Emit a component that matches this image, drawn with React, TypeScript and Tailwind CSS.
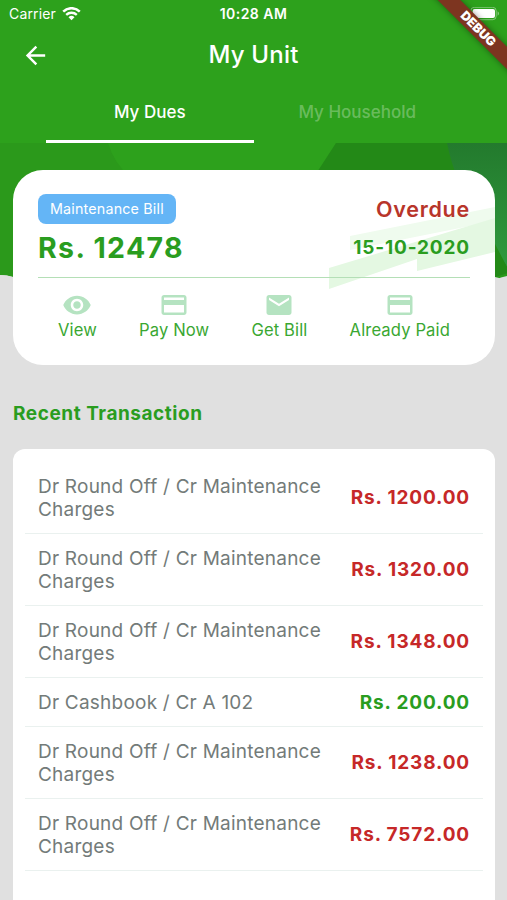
import { MdArrowBack, MdCreditCard, MdEmail, MdRemoveRedEye } from 'react-icons/md';

const actions = [
  { label: 'View', icon: MdRemoveRedEye },
  { label: 'Pay Now', icon: MdCreditCard },
  { label: 'Get Bill', icon: MdEmail },
  { label: 'Already Paid', icon: MdCreditCard },
];

const transactions = [
  { title: 'Dr Round Off / Cr Maintenance Charges', amount: 'Rs. 1200.00', credit: false },
  { title: 'Dr Round Off / Cr Maintenance Charges', amount: 'Rs. 1320.00', credit: false },
  { title: 'Dr Round Off / Cr Maintenance Charges', amount: 'Rs. 1348.00', credit: false },
  { title: 'Dr Cashbook / Cr A 102', amount: 'Rs. 200.00', credit: true },
  { title: 'Dr Round Off / Cr Maintenance Charges', amount: 'Rs. 1238.00', credit: false },
  { title: 'Dr Round Off / Cr Maintenance Charges', amount: 'Rs. 7572.00', credit: false },
];

function StatusBar() {
  return (
    <div className="grid h-[27px] grid-cols-3 items-center px-[8px] text-[14px] text-white">
      <div className="flex items-center gap-[6px] pl-px">
        <span className="tracking-[0.15px]">Carrier</span>
        <svg width="19" height="14" viewBox="0 0 19 14" fill="none" stroke="currentColor">
          <path d="M1.2 4.6a11.8 11.8 0 0 1 16.6 0" strokeWidth="2.5" />
          <path d="M4.2 7.9a7.6 7.6 0 0 1 10.6 0" strokeWidth="2.3" />
          <path d="M9.5 13.2 6.5 10.2a4.3 4.3 0 0 1 6 0Z" fill="currentColor" stroke="none" />
        </svg>
      </div>
      <span className="text-center font-semibold tracking-[0.45px]">10:28 AM</span>
      <svg className="relative -mr-px justify-self-end" width="30" height="14" viewBox="0 0 30 14">
        <rect x="0.8" y="0.3" width="25.4" height="12.4" rx="3.6" fill="none" stroke="white" strokeOpacity="0.4" />
        <rect x="2.6" y="1.9" width="22.4" height="9.2" rx="2" fill="white" />
        <path d="M27.6 4.3c1.8.8 1.8 3.6 0 4.4Z" fill="white" fillOpacity="0.45" />
      </svg>
    </div>
  );
}

function DebugBanner() {
  return (
    <div className="pointer-events-none absolute right-0 top-0 z-10 h-20 w-20 overflow-hidden">
      <div className="absolute left-[-9px] top-[21px] flex h-[16px] w-[120px] rotate-45 items-center justify-center bg-[#7d3520] text-[12.6px] font-black text-white shadow-[0_0_6px_rgba(0,0,0,0.4)]">
        DEBUG
      </div>
    </div>
  );
}

function Backdrop() {
  return (
    <svg className="absolute inset-x-0 top-0" width="507" height="137" viewBox="0 0 507 137">
      <defs>
        <linearGradient id="teal" x1="0" y1="0" x2="0" y2="1">
          <stop offset="0" stopColor="#237a2d" />
          <stop offset="1" stopColor="#2f9a3e" />
        </linearGradient>
      </defs>
      <path d="M0 0H507V137L495 134H13Q7 132 0 132Z" fill="#2b991b" />
      <path d="M108 0H336L318 34H130Q114 20 108 0Z" fill="#2da11c" />
      <path d="M336 0H507V130L495 134V40H310Z" fill="#238917" />
      <path d="M447 0H507V124Q496 105 480 80Q455 40 447 0Z" fill="url(#teal)" />
      <path d="M495 101L507 124V130L495 134Z" fill="#238917" />
      <path d="M0 132Q7 132 13 134V137H0Z" fill="#e0e0e0" />
      <path d="M507 133Q501 134 495 137H507Z" fill="#e0e0e0" />
    </svg>
  );
}

function BillCard() {
  return (
    <div className="relative ml-[13px] mr-[12px] h-[195px] overflow-hidden rounded-[30px] bg-white">
      <svg className="absolute right-0 top-[36px]" width="166" height="86" viewBox="0 0 166 86" fill="#e4f8e2">
        <path d="M21 30 166 1V15L21 44Z" fill="#effbee" />
        <path d="M0 62 166 12V46L88 65V53L0 83Z" />
      </svg>
      <div className="relative px-[25px] pt-[24px]">
        <div className="flex h-[30px] items-center justify-between">
          <div className="flex h-[30px] items-center rounded-lg bg-[#64b5f6] px-3 text-[14.3px] tracking-[0.18px] text-white">
            Maintenance Bill
          </div>
          <p className="text-[21.5px] font-semibold tracking-[0.75px] text-[#b8352a]">Overdue</p>
        </div>
        <div className="flex h-[49px] items-center justify-between text-[#2a9d1f]">
          <p className="text-[28.5px] font-bold tracking-[1.35px]">Rs. 12478</p>
          <p className="text-[19px] font-bold tracking-[0.85px]">15-10-2020</p>
        </div>
        <div className="mt-[4px] h-px bg-[#b4dfb6]" />
        <div className="flex justify-between px-5 pt-[12px]">
          {actions.map(({ label, icon: Icon }) => (
            <div key={label} className="flex flex-col items-center text-[#3aa732]">
              <Icon className="h-[30px] w-[30px] text-[#b5e3c1]" />
              <span className="-mt-px text-[16.6px] leading-[22px] tracking-[0.12px]">{label}</span>
            </div>
          ))}
        </div>
      </div>
    </div>
  );
}

export default function App() {
  return (
    <div className="relative flex h-[900px] w-[507px] flex-col overflow-hidden bg-[#e0e0e0] font-['Inter',sans-serif]">
      <header className="h-[143px] bg-[#2da11c] text-white">
        <StatusBar />
        <div className="relative flex h-[56px] items-center justify-center">
          <button className="absolute left-[21px]">
            <MdArrowBack className="h-[29px] w-[29px]" />
          </button>
          <h1 className="text-[24px] font-medium tracking-[0.2px]">My Unit</h1>
        </div>
        <nav className="mx-[46px] grid h-[60px] grid-cols-2 text-center text-[17px] font-medium">
          <span className="border-b-[3px] border-white pt-[17px]">My Dues</span>
          <span className="pt-[17px] text-white/30">My Household</span>
        </nav>
      </header>
      <DebugBanner />

      <main className="relative flex flex-1 flex-col pt-[27px]">
        <Backdrop />
        <BillCard />
        <h2 className="mt-[35px] pl-[13px] text-[19px] font-bold leading-[28px] tracking-[0.55px] text-[#2a9d1f]">
          Recent Transaction
        </h2>
        <ul className="ml-[13px] mr-[12px] mt-[21px] flex-1 rounded-t-[12px] bg-white px-3 pt-[13px]">
          {transactions.map((t, i) => (
            <li
              key={i}
              className="flex items-center justify-between border-b border-[#eaf1ef] px-[13px] py-[12.5px]"
            >
              <p className="w-[290px] text-[19px] leading-[23px] tracking-[0.22px] text-[#737b79]">{t.title}</p>
              <p
                className={`text-[19px] font-bold leading-[23px] tracking-[0.85px] ${
                  t.credit ? 'text-[#2a9d1f]' : 'text-[#c62828]'
                }`}
              >
                {t.amount}
              </p>
            </li>
          ))}
        </ul>
      </main>
    </div>
  );
}
